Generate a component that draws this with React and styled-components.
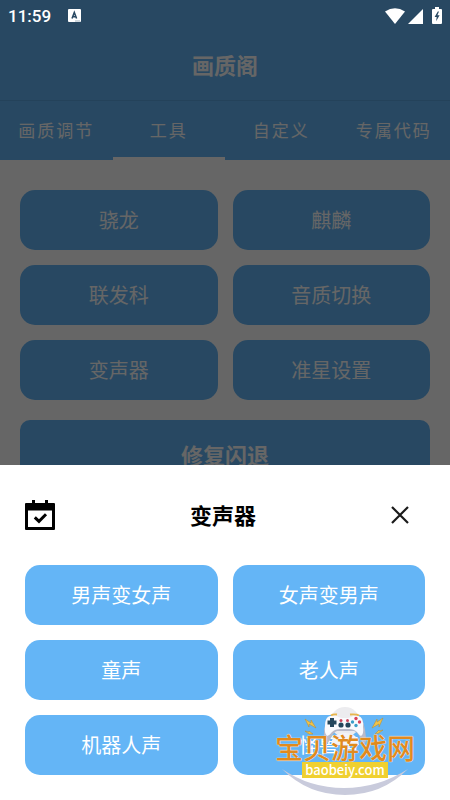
import { useState } from "react";
import styled, { createGlobalStyle, css } from "styled-components";

const TABS = ["画质调节", "工具", "自定义", "专属代码"];

const TOOLS = ["骁龙", "麒麟", "联发科", "音质切换", "变声器", "准星设置"];

const VOICES = [
  "男声变女声",
  "女声变男声",
  "童声",
  "老人声",
  "机器人声",
  "怪兽声",
];

const App = () => {
  const [activeTab, setActiveTab] = useState("工具");

  return (
    <>
      <GlobalStyle />
      <Page>
        <StatusBar />
        <Header>
          <Title>画质阁</Title>
        </Header>
        <Tabs>
          {TABS.map((tab) => (
            <Tab
              key={tab}
              $active={tab === activeTab}
              onClick={() => setActiveTab(tab)}
            >
              {tab}
            </Tab>
          ))}
        </Tabs>
        <Content>
          <ButtonGrid>
            {TOOLS.map((tool) => (
              <BlueButton key={tool}>{tool}</BlueButton>
            ))}
          </ButtonGrid>
          <RepairButton>修复闪退</RepairButton>
        </Content>
      </Page>
      <Backdrop />
      <VoiceSheet />
    </>
  );
};

const StatusBar = () => {
  return (
    <StatusContainer>
      <StatusGroup $gap="17px">
        <Clock>11:59</Clock>
        <svg width="13" height="14" viewBox="0 0 13 14" aria-hidden="true">
          <rect width="13" height="13" rx="1" fill="#fff" />
          <path
            d="M4 9.600 6.300 3.400l2.300 6.200M4.700 7.700h3.200"
            fill="none"
            stroke="#284862"
            strokeWidth="1.500"
          />
          <path d="M7 12h5" stroke="#9fb0bd" strokeWidth="1" />
        </svg>
      </StatusGroup>
      <StatusGroup $gap="3px">
        <svg width="20" height="16" viewBox="0 0 20 16" aria-hidden="true">
          <path fill="#fff" d="M0 3.600Q10-3.200 20 3.600L10 16z" />
        </svg>
        <svg width="15" height="16" viewBox="0 0 15 16" aria-hidden="true">
          <path fill="#fff" d="M15 1v15H0z" />
        </svg>
        <Battery width="10" height="17" viewBox="0 0 10 17" aria-hidden="true">
          <path
            fill="#fff"
            d="M3 0h4v2h2q1 0 1 1v13q0 1-1 1H1q-1 0-1-1V3q0-1 1-1h2z"
          />
          <path
            fill="#284862"
            d="M5.800 4.400 2.600 10h2.100l-.6 4.200L7.600 8.200H5.400l1.600-3.800z"
          />
        </Battery>
      </StatusGroup>
    </StatusContainer>
  );
};

const VoiceSheet = () => {
  return (
    <Sheet role="dialog" aria-labelledby="sheet-title">
      <SheetHeader>
        <svg width="30" height="30" viewBox="0 0 30 30" aria-hidden="true">
          <path d="M7 0h3v3h10V0h3v3h6q1 0 1 1v25q0 1-1 1H1q-1 0-1-1V4q0-1 1-1h6z" />
          <path fill="#fff" d="M3 10.500h24V27H3z" />
          <path
            d="m9.800 17.300 4.200 4 7-7"
            fill="none"
            stroke="#000"
            strokeWidth="3"
          />
        </svg>
        <SheetTitle id="sheet-title">变声器</SheetTitle>
        <CloseButton aria-label="关闭">
          <svg width="18" height="18" viewBox="0 0 18 18" aria-hidden="true">
            <path
              d="m1 1 16 16M17 1 1 17"
              stroke="#1a1a1a"
              strokeWidth="2.200"
            />
          </svg>
        </CloseButton>
      </SheetHeader>
      <ButtonGrid>
        {VOICES.map((voice) => (
          <BlueButton key={voice}>{voice}</BlueButton>
        ))}
      </ButtonGrid>
      <Watermark />
    </Sheet>
  );
};

const Watermark = () => {
  return (
    <WatermarkContainer>
      <Gamepad width="90" height="40" viewBox="0 0 90 40" aria-hidden="true">
        <circle cx="45" cy="17" r="15" fill="#ececef" />
        <path
          fill="#f0c24a"
          stroke="#b98a2a"
          strokeWidth="0.500"
          d="M5 14l6 4 0-3 5 8-7-4 0 3zM83 13l-6 4 0-3-5 9 7-4 0 3zM5 26l4 1v-1l4 3-4 0zM83 25l-4 1v-1l-4 4 4-1z"
        />
        <path
          d="M31 10.500q2-1.500 6-1M59 10.500q-2-1.500-9-1"
          stroke="#e8b64c"
          strokeWidth="2"
          fill="none"
        />
        <path
          fill="#b9bac9"
          d="M27 14Q23 24 24 37q3 3 6-2 3-8 7-9h17q4 1 7 9 3 5 5 2 0-13-4-23z"
        />
        <path
          fill="#fafafd"
          d="M30 11h7q2 2 8 2t8-2h5q6 1 5 11 1 7-2 9-2-1-4-4-3-3-8-3h-9q-5 0-8 3-2 3-5 4-3-3-2-10 0-9 5-10z"
        />
        <path fill="#f3f3f7" d="M31 40q1-12 14-12t14 12z" />
        <path fill="#24465c" d="M30 13h4v2.500h2.500v4H34V22h-4v-2.500h-2.500v-4H30z" />
        <circle cx="41" cy="15.500" r="1.500" fill="#c9445a" />
        <circle cx="47.500" cy="15.500" r="1.500" fill="#c9445a" />
        <circle cx="41" cy="20" r="2.600" fill="#24465c" />
        <circle cx="48" cy="20" r="2.600" fill="#24465c" />
        <circle cx="56" cy="13.500" r="1.700" fill="#d9435a" />
        <circle cx="56" cy="20.500" r="1.700" fill="#3c9fc8" />
        <circle cx="52.500" cy="17" r="1.700" fill="#3c9fc8" />
        <circle cx="59.500" cy="17" r="1.700" fill="#d9435a" />
      </Gamepad>
      <SiteName>宝贝游戏网</SiteName>
      <SiteUrl>baobeiy.com</SiteUrl>
      <Smile width="126" height="26" viewBox="0 0 126 26" aria-hidden="true">
        <path fill="#c9cbdc" d="M0 0q28 19 62 19T126 0q-26 26-63 26T0 0z" />
      </Smile>
    </WatermarkContainer>
  );
};

const GlobalStyle = createGlobalStyle`
  * {
    box-sizing: border-box;
  }
  body {
    margin: 0;
    background: #fff;
    font-family: "Noto Sans CJK SC", sans-serif;
  }
  button {
    font-family: inherit;
    border: none;
    padding: 0 0 2px;
    cursor: pointer;
  }
`;

const Page = styled.main`
  height: 100vh;
  overflow: hidden;
  background: #fff;
`;

const StatusContainer = styled.div`
  /* stays bright above the backdrop */
  position: relative;
  z-index: 3;
  display: flex;
  justify-content: space-between;
  align-items: center;
  height: 31px;
  padding: 0 8px;
  background: #284862;
`;

const StatusGroup = styled.div`
  display: flex;
  align-items: center;
  gap: ${({ $gap }) => $gap};
`;

const Clock = styled.time`
  font-family: Roboto, sans-serif;
  font-size: 17px;
  font-weight: 500;
  color: #fff;
`;

const Battery = styled.svg`
  margin-left: 6px;
`;

const Header = styled.header`
  display: flex;
  justify-content: center;
  align-items: center;
  height: 70px;
  padding-bottom: 4px;
  background: #64b5f6;
  border-bottom: 1px solid #5aa5e2;
`;

const Title = styled.h1`
  margin: 0;
  font-size: 22px;
  font-weight: 700;
  color: #fff;
`;

const Tabs = styled.nav`
  display: flex;
  height: 59px;
  background: #64b5f6;
`;

const Tab = styled.button`
  flex: 1 1 0;
  background: none;
  border-top: 3px solid transparent;
  border-bottom: 3px solid transparent;
  font-size: 17px;
  letter-spacing: 2px;
  white-space: nowrap;
  color: #fff;
  ${({ $active }) =>
    $active &&
    css`
      border-bottom-color: #fff;
    `}
`;

const Content = styled.section`
  display: flex;
  flex-direction: column;
  gap: 20px;
  padding: 30px 20px;
`;

const ButtonGrid = styled.div`
  display: grid;
  grid-template-columns: 1fr 1fr;
  gap: 15px;
`;

const BlueButton = styled.button`
  height: 60px;
  border-radius: 15px;
  background: #64b5f6;
  font-size: 20px;
  color: #fff;
`;

const RepairButton = styled(BlueButton)`
  height: 70px;
  border-radius: 10px;
  font-size: 22px;
  font-weight: 700;
`;

const Backdrop = styled.div`
  position: fixed;
  inset: 0;
  z-index: 1;
  background: rgba(0, 0, 0, 0.6);
`;

const Sheet = styled.section`
  position: fixed;
  left: 0;
  right: 0;
  bottom: 0;
  z-index: 2;
  padding: 0 25px 25px;
  background: #fff;
`;

const SheetHeader = styled.header`
  display: flex;
  justify-content: space-between;
  align-items: center;
  height: 100px;
`;

const SheetTitle = styled.h2`
  margin: 0;
  padding-bottom: 2px;
  font-size: 22px;
  font-weight: 700;
  color: #000;
`;

const CloseButton = styled.button`
  display: flex;
  align-items: center;
  width: 34px;
  height: 34px;
  padding: 0;
  background: none;
`;

const WatermarkContainer = styled.div`
  position: absolute;
  right: 34px;
  bottom: 5px;
  display: flex;
  flex-direction: column;
  align-items: center;
  width: 142px;
  pointer-events: none;
`;

const Gamepad = styled.svg`
  margin-bottom: -13px;
`;

const SiteName = styled.span`
  z-index: 1;
  font-size: 28px;
  font-weight: 500;
  line-height: 30px;
  color: #e08a1e;
  text-shadow: 0 0 1px #fff, 0 0 1px #fff;
`;

const SiteUrl = styled.span`
  z-index: 1;
  padding: 0 3px;
  background: #f0d030;
  font-size: 13px;
  font-weight: 500;
  line-height: 16px;
  color: #fff;
`;

const Smile = styled.svg`
  margin-top: -9px;
`;

export default App;
